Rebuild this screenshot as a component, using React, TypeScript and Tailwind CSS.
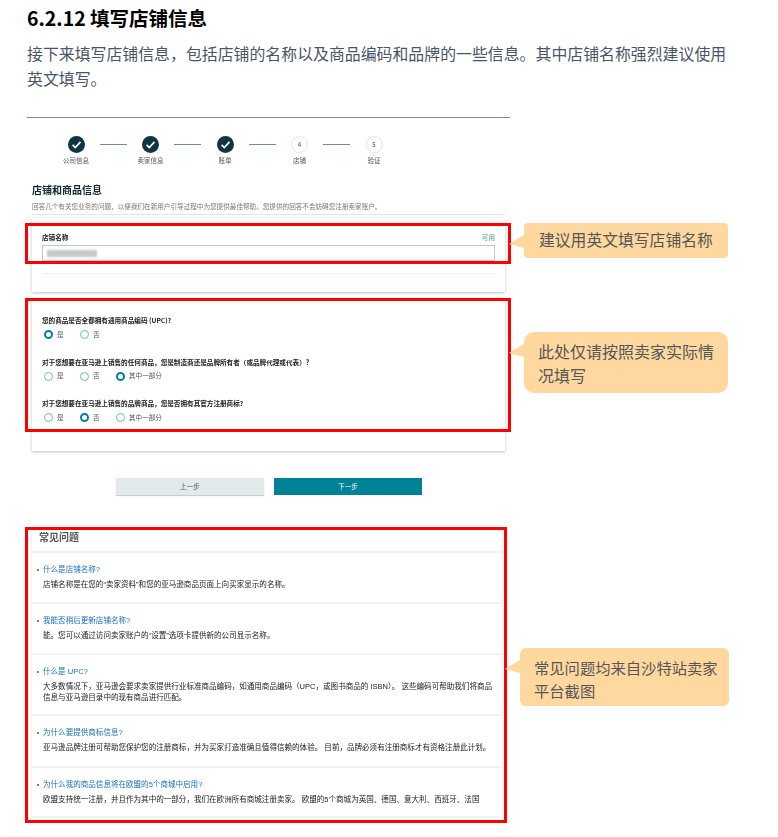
const steps = [
  { label: '公司信息', done: true },
  { label: '卖家信息', done: true },
  { label: '账单', done: true },
  { label: '店铺', done: false, num: '4' },
  { label: '验证', done: false, num: '5' },
];

const questions = [
  { text: '您的商品是否全都拥有通用商品编码 (UPC)?', options: ['是', '否'], selected: 0 },
  {
    text: '对于您想要在亚马逊上销售的任何商品，您是制造商还是品牌所有者（或品牌代理或代表）？',
    options: ['是', '否', '其中一部分'],
    selected: 2,
  },
  {
    text: '对于您想要在亚马逊上销售的品牌商品，您是否拥有其官方注册商标?',
    options: ['是', '否', '其中一部分'],
    selected: 1,
  },
];

const faqs = [
  {
    q: '什么是店铺名称?',
    a: '店铺名称是在您的“卖家资料”和您的亚马逊商品页面上向买家显示的名称。',
    h: 'h-[51px]',
  },
  {
    q: '我能否稍后更新店铺名称?',
    a: '能。您可以通过访问卖家账户的“设置”选项卡提供新的公司显示名称。',
    h: 'h-[51px]',
  },
  {
    q: '什么是 UPC?',
    a: '大多数情况下，亚马逊会要求卖家提供行业标准商品编码，如通用商品编码（UPC，或图书商品的 ISBN）。 这些编码可帮助我们将商品信息与亚马逊目录中的现有商品进行匹配。',
    h: 'h-[61px]',
  },
  {
    q: '为什么要提供商标信息?',
    a: '亚马逊品牌注册可帮助您保护您的注册商标，并为买家打造准确且值得信赖的体验。 目前，品牌必须有注册商标才有资格注册此计划。',
    h: 'h-[52px]',
  },
  {
    q: '为什么我的商品信息将在欧盟的5个商城中启用?',
    a: '欧盟支持统一注册，并且作为其中的一部分，我们在欧洲所有商城注册卖家。 欧盟的5个商城为英国、德国、意大利、西班牙、法国',
    h: 'h-[50px]',
  },
];

function Step({ label, done, num }: { label: string; done: boolean; num?: string }) {
  return (
    <div className="flex w-[40px] flex-col items-center">
      {done ? (
        <svg className="h-[17px] w-[17px]" viewBox="0 0 17 17">
          <circle cx="8.5" cy="8.5" r="8.5" fill="#0f3640" />
          <path d="M4.6 8.8l2.7 2.7 5.2-5.6" fill="none" stroke="#fff" strokeWidth="1.7" />
        </svg>
      ) : (
        <div className="flex h-[17px] w-[17px] items-center justify-center rounded-full border border-[#dfe5e5] text-[6px] text-[#444]">
          {num}
        </div>
      )}
      <span className="mt-[2px] text-[6.5px] leading-[10px] text-[#555]">{label}</span>
    </div>
  );
}

function Radio({ checked }: { checked: boolean }) {
  return checked ? (
    <span className="h-[9px] w-[9px] shrink-0 rounded-full border-[2.5px] border-[#008296] bg-white" />
  ) : (
    <span className="h-[9px] w-[9px] shrink-0 rounded-full border border-[#6fb5c2] bg-white" />
  );
}

function Callout({ className, children }: { className: string; children: React.ReactNode }) {
  return (
    <div className={`absolute bg-[#ffd8a0] text-[#555] ${className}`}>
      <svg className="absolute right-full top-[12px] h-[13px] w-[15px]" viewBox="0 0 15 13">
        <polygon points="0,9 15,0 15,13" fill="#ffd8a0" />
      </svg>
      {children}
    </div>
  );
}

export default function App() {
  return (
    <div className="relative h-[837px] w-[778px] overflow-hidden bg-white pl-[27px] pt-[5px] font-['Noto_Sans_CJK_SC','Liberation_Sans',sans-serif]">
      <h3 className="text-[19.5px] font-bold leading-[25px] text-black">6.2.12 填写店铺信息</h3>
      <p className="mt-[11px] w-[710px] text-[15.9px] leading-[25px] text-[#4a5568]">
        接下来填写店铺信息，包括店铺的名称以及商品编码和品牌的一些信息。其中店铺名称强烈建议使用英文填写。
      </p>

      {/* Seller registration screenshot */}
      <div className="mt-[26px] w-[483px] border-t border-[#7f8c8d] blur-[0.4px]">
        <div className="flex pl-[29px] pt-[18px]">
          {steps.map((step, i) => (
            <div key={step.label} className="flex items-start">
              <Step {...step} />
              {i < steps.length - 1 && <div className="mx-[3.75px] mt-[8px] h-px w-[27px] bg-[#6f8f94]" />}
            </div>
          ))}
        </div>

        <div className="ml-[5px] w-[473px]">
          <h4 className="mt-[18px] text-[10px] font-bold leading-[14px] text-[#0f2a30]">店铺和商品信息</h4>
          <div className="mt-[4px] border-b border-[#e3e6e6] pb-[3px] text-[6.6px] leading-[10px] text-[#777]">
            回答几个有关您业务的问题，以便我们在新用户引导过程中为您提供最佳帮助。您提供的回答不会妨碍您注册卖家账户。
          </div>

          <div className="mt-[3px] h-[74px] px-[10px] pt-[14px] shadow-[0_1px_3px_rgba(0,0,0,0.25)]">
            <div className="flex justify-between text-[6.6px] leading-[10px]">
              <span className="font-bold text-[#222]">店铺名称</span>
              <span className="text-[#3f9f8f]">可用</span>
            </div>
            <div className="mt-[3px] flex h-[16px] items-center border border-[#c4c8c8] px-[4px]">
              <div className="h-[7px] w-[50px] bg-[#c4c8c8] blur-[1px]" />
            </div>
            <div className="mt-[12px] border-t border-[#eeeeee]" />
          </div>

          <div className="mt-[6px] h-[153px] px-[10px] pt-[17px] shadow-[0_1px_3px_rgba(0,0,0,0.25)]">
            {questions.map((item) => (
              <div key={item.text} className="mb-[17px]">
                <div className="text-[6.6px] font-bold leading-[10px] text-[#222]">{item.text}</div>
                <div className="mt-[4.5px] flex h-[10px] pl-[1.5px]">
                  {item.options.map((opt, i) => (
                    <label key={opt} className="flex w-[36px] items-center gap-[4.5px] text-[6.6px] text-[#555]">
                      <Radio checked={i === item.selected} />
                      <span className="whitespace-nowrap">{opt}</span>
                    </label>
                  ))}
                </div>
              </div>
            ))}
          </div>

          <div className="ml-[84px] mt-[27px] flex gap-[10px] text-[6.6px]">
            <button className="h-[17px] w-[148px] bg-[#e3eaeb] text-[#555] shadow-[0_1px_1px_rgba(0,0,0,0.2)]">上一步</button>
            <button className="h-[17px] w-[148px] bg-[#008296] text-white">下一步</button>
          </div>
        </div>
      </div>

      {/* FAQ screenshot */}
      <div className="ml-[4px] mt-[33px] w-[472px] border-x border-[#f2f2f2] blur-[0.4px]">
        <h4 className="h-[23px] pl-[7px] text-[10px] font-bold leading-[17px] text-[#555]">常见问题</h4>
        {faqs.map((faq) => (
          <div
            key={faq.q}
            className={`border-t-2 border-[#f2f2f2] pl-[11px] pr-[3px] pt-[12px] font-['Liberation_Sans','Noto_Sans_CJK_SC',sans-serif] text-[7.55px] ${faq.h}`}
          >
            <div className="relative leading-[10px] text-[#1a6fc0]">
              <span className="absolute left-[-6px] top-[4px] h-[2px] w-[2px] rounded-full bg-[#555]" />
              {faq.q}
            </div>
            <div className="mt-[4px] leading-[11px] text-[#222]">{faq.a}</div>
          </div>
        ))}
        <div className="h-[6px] border-t-2 border-[#f2f2f2]" />
      </div>

      {/* Annotations */}
      <div className="absolute left-[25px] top-[223px] h-[41px] w-[486px] border-[3px] border-[#ff0000]" />
      <div className="absolute left-[25px] top-[298px] h-[134px] w-[486px] border-[3px] border-[#ff0000]" />
      <div className="absolute left-[25px] top-[527px] h-[296px] w-[482px] border-[3px] border-[#ff0000]" />

      <Callout className="left-[524px] top-[223px] h-[35px] w-[204px] rounded-[4px] pl-[15px] text-[15.8px] leading-[34px]">
        建议用英文填写店铺名称
      </Callout>
      <Callout className="left-[524px] top-[332px] h-[61px] w-[204px] rounded-[10px] pl-[14px] pr-[14px] pt-[7px] text-[16px] leading-[24px]">
        此处仅请按照卖家实际情况填写
      </Callout>
      <Callout className="left-[520px] top-[648px] h-[58px] w-[209px] rounded-[6px] pl-[14px] pr-[10px] pt-[8px] text-[15.3px] leading-[23px]">
        常见问题均来自沙特站卖家平台截图
      </Callout>
    </div>
  );
}
